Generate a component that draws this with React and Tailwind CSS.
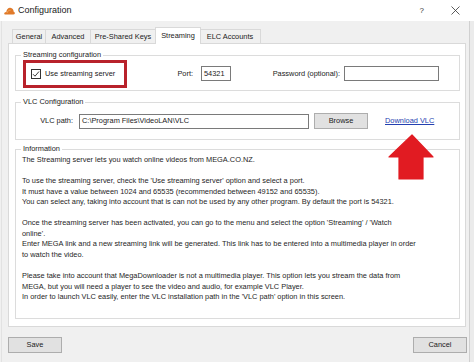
import React from "react";

const font = { fontFamily: '"Liberation Sans", Arial, sans-serif' };

function Tab({ label, selected, w }) {
  return selected ? (
    <div
      className="h-[17px] bg-white border border-[#d9d9d9] border-b-0 -mb-px flex items-center justify-center text-[7.4px] text-[#1a1a1a] relative z-10 -mx-[1px]"
      style={{ width: w }}
    >
      {label}
    </div>
  ) : (
    <div
      className="h-[14px] bg-[#f0f0f0] border border-[#d9d9d9] border-b-0 flex items-center justify-center text-[7.4px] text-[#1a1a1a] -ml-px first:ml-0"
      style={{ width: w }}
    >
      {label}
    </div>
  );
}

function Group({ title, className, children }) {
  return (
    <fieldset className={"border border-[#dcdcdc] min-w-0 " + className}>
      <legend className="ml-[5px] px-[2px] text-[7.4px] leading-[10px] text-[#1a1a1a]">
        {title}
      </legend>
      {children}
    </fieldset>
  );
}

const infoLines = [
  "The Streaming server lets you watch online videos from MEGA.CO.NZ.",
  "",
  "To use the streaming server, check the 'Use streaming server' option and select a port.",
  "It must have a value between 1024 and 65535 (recommended between 49152 and 65535).",
  "You can select any, taking into account that is can not be used by any other program. By default the port is 54321.",
  "",
  "Once the streaming server has been activated, you can go to the menu and select the option 'Streaming' / 'Watch",
  "online'.",
  "Enter MEGA link and a new streaming link will be generated. This link has to be entered into a multimedia player in order",
  "to watch the video.",
  "",
  "Please take into account that MegaDownloader is not a multimedia player. This option lets you stream the data from",
  "MEGA, but you will need a player to see the video and audio, for example VLC Player.",
  "In order to launch VLC easily, enter the VLC installation path in the 'VLC path' option in this screen.",
];

export default function App() {
  return (
    <div
      className="w-[474px] h-[362px] bg-[#f0f0f0] relative overflow-hidden flex flex-col"
      style={font}
    >
      {/* Title bar */}
      <div className="h-[21px] bg-white flex items-center shrink-0">
        <svg width="11" height="8" viewBox="0 0 11 8" className="ml-[4px]">
          <path
            d="M1 7.5 C0.2 7.5 0 6.6 0.5 5.8 C1 5 1.8 4.8 2.3 4.9 C2.6 2.3 4.3 0.6 6.3 0.8 C8.4 1 9.6 2.8 9.7 4.8 C10.6 5 11 5.8 10.8 6.6 C10.6 7.3 10 7.5 9.6 7.5 Z"
            fill="#e07a2a"
          />
          <path d="M3 6 C3.5 4 5 3 6.5 3.3" stroke="#f5b26b" strokeWidth="0.8" fill="none" />
        </svg>
        <span className="ml-[3px] text-[9px] text-[#1a1a1a] leading-none">Configuration</span>
        <div className="flex-1" />
        <span className="text-[8px] text-[#333] mr-[27px] leading-none">?</span>
        <svg width="9" height="9" viewBox="0 0 9 9" className="mr-[14px]">
          <path d="M0.5 0.5 L8.5 8.5 M8.5 0.5 L0.5 8.5" stroke="#333" strokeWidth="0.8" />
        </svg>
      </div>

      {/* Body */}
      <div className="flex-1 flex">
        <div className="w-[2px] border-r border-[#e2e2e2]" />
        <div className="flex-1 flex flex-col pl-[6px] pr-[1px]">
          {/* Tabs */}
          <div className="flex items-end pl-[4px] mt-[5px] h-[17px]">
            <Tab label="General" w={34} />
            <Tab label="Advanced" w={46} />
            <Tab label="Pre-Shared Keys" w={66} />
            <Tab label="Streaming" selected w={46} />
            <Tab label="ELC Accounts" w={62} />
          </div>

          {/* Panel */}
          <div className="w-[458px] h-[284px] bg-white border border-[#d9d9d9] flex flex-col pl-[6px] pr-[5px] pt-[6px]">
            {/* Streaming configuration */}
            <Group title="Streaming configuration" className="h-[41px]">
              <div className="flex items-center h-[29px] -mt-[1px]">
                <div className="ml-[7px] w-[104px] h-[28px] border-[3px] border-[#b8222b] flex items-center">
                  <div className="ml-[5px] w-[10px] h-[10px] border border-[#333] bg-white flex items-center justify-center">
                    <svg width="8" height="8" viewBox="0 0 8 8">
                      <path d="M1 4.2 L3 6.2 L7 1.5" stroke="#222" strokeWidth="0.9" fill="none" />
                    </svg>
                  </div>
                  <span className="ml-[4px] text-[7.4px] text-[#1a1a1a]">Use streaming server</span>
                </div>
                <div className="w-[66px] text-right text-[7.4px] text-[#1a1a1a]">Port:</div>
                <div className="ml-[8px] w-[30px] h-[15px] border border-[#7a7a7a] bg-white flex items-center pl-[2px] text-[7.4px] text-[#1a1a1a]">
                  54321
                </div>
                <div className="w-[109px] text-right text-[7.4px] text-[#1a1a1a]">Password (optional):</div>
                <div className="ml-[4px] w-[95px] h-[15px] border border-[#7a7a7a] bg-white" />
              </div>
            </Group>

            {/* VLC Configuration */}
            <Group title="VLC Configuration" className="h-[43px] mt-[6px]">
              <div className="flex items-center h-[22px] mt-[3px]">
                <div className="w-[57px] text-right text-[7.4px] text-[#1a1a1a]">VLC path:</div>
                <div className="ml-[6px] w-[230px] h-[15px] border border-[#7a7a7a] bg-white flex items-center pl-[2px] text-[7.4px] text-[#1a1a1a]">
                  C:\Program Files\VideoLAN\VLC
                </div>
                <div className="ml-[5px] w-[54px] h-[16px] bg-[#e1e1e1] border border-[#adadad] flex items-center justify-center text-[7.4px] text-[#1a1a1a]">
                  Browse
                </div>
                <span className="ml-[17px] text-[7.4px] text-[#2440b0] underline">Download VLC</span>
              </div>
            </Group>

            {/* Information */}
            <Group title="Information" className="h-[175px] mt-[4px]">
              <div className="pl-[6px] pt-[1px] text-[7.4px] leading-[10.55px] text-[#1e1e1e]">
                {infoLines.map((l, i) => (
                  <div key={i} className="h-[10.55px] whitespace-nowrap">
                    {l}
                  </div>
                ))}
              </div>
            </Group>
          </div>

          {/* Bottom buttons */}
          <div className="flex justify-between mt-[10px] w-[458px]">
            <div className="w-[54px] h-[16px] bg-[#e1e1e1] border border-[#adadad] flex items-center justify-center text-[7.4px] text-[#1a1a1a]">
              Save
            </div>
            <div className="w-[54px] h-[16px] bg-[#e1e1e1] border border-[#adadad] flex items-center justify-center text-[7.4px] text-[#1a1a1a] -mr-[1px]">
              Cancel
            </div>
          </div>
        </div>
        <div className="w-[5px] border-l border-[#d0d0d0] bg-[#ebebeb]" />
      </div>

      {/* Red annotation arrow */}
      <svg
        className="absolute left-[388px] top-[134px]"
        width="46"
        height="46"
        viewBox="0 0 46 46"
      >
        <path
          d="M24 1 L45 23 L35 23 L35 45 L11 45 L11 23 L1 23 Z"
          fill="#e11b22"
          stroke="#e11b22"
          strokeWidth="1.2"
          strokeLinejoin="round"
        />
      </svg>
    </div>
  );
}
